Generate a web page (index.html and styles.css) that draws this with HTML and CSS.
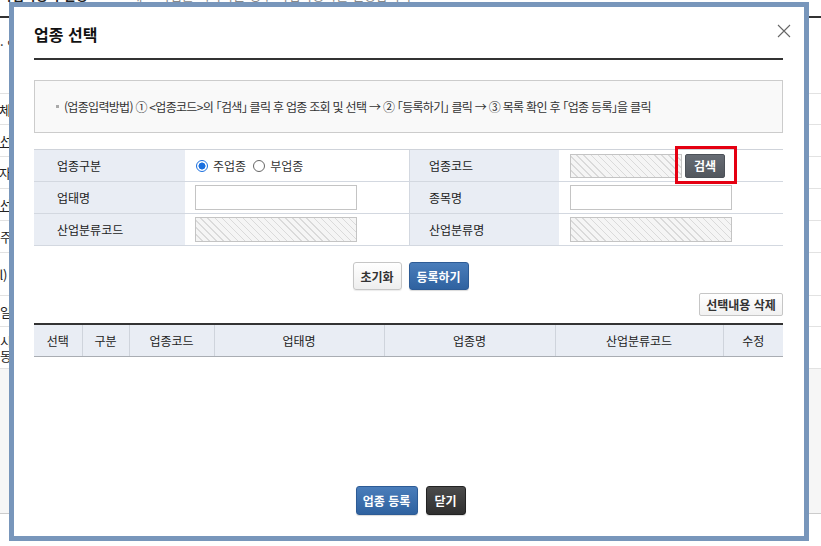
FILE: index.html
```html
<!DOCTYPE html>
<html lang="ko">
<head>
<meta charset="utf-8">
<title>업종 선택</title>
<link rel="stylesheet" href="styles.css">
</head>
<body>
<div class="page">
  <div class="page-top"><b>사업자등록 신청</b>　<span>새로 사업을 시작하는 경우 사업자등록을 신청합니다.</span></div>
  <div class="page-rule"></div>
  <div class="page-sub">· 업종</div>
  <div class="page-rows">
    <div class="prow r32"><span class="pl">업체</span></div>
    <div class="prow r32"><span class="pl0 ul">선택</span></div>
    <div class="prow r32"><span class="pl">대자</span></div>
    <div class="prow r32"><span class="pl0 ul">선택</span></div>
    <div class="prow r32"><span class="pl0">주소</span></div>
    <div class="prow r43"><span class="pl2">(l)</span></div>
    <div class="prow r31"><span class="pl0">일자</span></div>
    <div class="prow r42"><span class="pl3">시 -<br>동</span></div>
  </div>
  <div class="page-gray"></div>
</div>

<div class="modal">
  <h2 class="modal-title">업종 선택</h2>
  <button class="close" type="button" aria-label="닫기">
    <svg width="14" height="14" viewBox="0 0 14 14"><path d="M1 1L13 13M13 1L1 13" stroke="#666" stroke-width="1.1" fill="none"/></svg>
  </button>

  <div class="guide"><span class="bullet"></span><span>(업종입력방법) ① &lt;업종코드&gt;의 ｢검색｣ 클릭 후 업종 조회 및 선택 → ② ｢등록하기｣ 클릭 → ③ 목록 확인 후 ｢업종 등록｣을 클릭</span></div>

  <div class="form">
    <div class="th">업종구분</div>
    <div class="td">
      <label class="radio on"><i></i>주업종</label>
      <label class="radio"><i></i>부업종</label>
    </div>
    <div class="th th2">업종코드</div>
    <div class="td td4">
      <span class="inp dis code"></span>
      <span class="search-wrap"><button class="btn-search" type="button">검색</button></span>
    </div>

    <div class="th">업태명</div>
    <div class="td"><span class="inp"></span></div>
    <div class="th th2">종목명</div>
    <div class="td td4"><span class="inp"></span></div>

    <div class="th">산업분류코드</div>
    <div class="td"><span class="inp dis"></span></div>
    <div class="th th2">산업분류명</div>
    <div class="td td4"><span class="inp dis"></span></div>
  </div>

  <div class="btn-row">
    <button class="btn btn-white" type="button">초기화</button>
    <button class="btn btn-blue" type="button">등록하기</button>
  </div>

  <div class="del-row">
    <button class="btn-del" type="button">선택내용 삭제</button>
  </div>

  <table class="list">
    <colgroup>
      <col class="c48"><col class="c47"><col class="c85"><col class="c170"><col class="c171"><col class="c168"><col class="c60">
    </colgroup>
    <thead>
      <tr><th>선택</th><th>구분</th><th>업종코드</th><th>업태명</th><th>업종명</th><th>산업분류코드</th><th>수정</th></tr>
    </thead>
  </table>

  <div class="footer">
    <button class="btn btn-blue btn-foot" type="button">업종 등록</button>
    <button class="btn btn-dark btn-foot" type="button">닫기</button>
  </div>
</div>
</body>
</html>
```

FILE: styles.css
```css
* { box-sizing: border-box; }
*::before, *::after { box-sizing: border-box; }
html, body { margin: 0; padding: 0; }
body {
  width: 821px;
  height: 546px;
  overflow: hidden;
  position: relative;
  background: #fff;
  color: #333;
  font-family: "Noto Sans CJK KR", "Noto Sans", sans-serif;
}

/* background page */
.page { font-size: 13px; color: #222; }
.page-top {
  height: 16px;
  line-height: 16px;
  padding-top: 0;
  white-space: nowrap;
  font-size: 13px;
  overflow: hidden;
}
.page-top b, .page-top span { display: inline-block; margin-top: -13px; vertical-align: top; }
.page-top span { color: #888; margin-left: 30px; }
.page-rule { height: 2px; background: #333; }
.page-sub { height: 75px; padding-top: 18px; line-height: 18px; font-size: 13px; }
.prow { border-bottom: 1px solid #e2e2e2; display: flex; align-items: center; white-space: nowrap; }
.prow:first-child { border-top: 1px solid #e2e2e2; }
.r32 { height: 32px; }
.r43 { height: 43px; }
.r31 { height: 31px; }
.r42 { height: 42px; }
.pl { margin-left: -13px; }
.pl0 { margin-left: 0; }
.ul { text-decoration: underline; }
.pl2 { margin-left: -5px; }
.pl3 { margin-left: 0; line-height: 15px; }
.page-gray { height: 145px; background: #f6f6f6; border-bottom: 1px solid #ccc; }

/* modal */
.modal {
  position: absolute;
  left: 9px;
  top: 2px;
  width: 800px;
  height: 539px;
  border: 5px solid #7896bb;
  background: #fff;
  padding: 0 21px 21px 20px;
  display: flex;
  flex-direction: column;
}
.modal-title {
  margin: 0;
  padding: 16px 0 13px;
  font-size: 16px;
  line-height: 22px;
  font-weight: bold;
  color: #111;
  border-bottom: 2px solid #333;
}
.close {
  position: absolute;
  top: 17px;
  right: 13px;
  width: 14px;
  height: 14px;
  padding: 0;
  border: 0;
  background: none;
}
.close svg { display: block; }

.guide {
  margin-top: 20px;
  border: 1px solid #ccc;
  background: #f9f9f9;
  padding: 16px 10px 16px 21px;
  font-size: 12px;
  line-height: 19px;
  color: #333;
  display: flex;
  align-items: center;
  white-space: nowrap;
  letter-spacing: -0.7px;
}
.bullet {
  width: 3px;
  height: 3px;
  background: #aaa;
  margin-right: 5px;
  flex: none;
}

.form {
  margin-top: 16px;
  border-top: 1px solid #cfd3da;
  display: grid;
  grid-template-columns: 151px 224px 150px 224px;
}
.th {
  height: 32px;
  background: #e9edf4;
  border-bottom: 1px solid #d3d8e0;
  padding-left: 23px;
  display: flex;
  align-items: center;
  font-size: 12px;
  color: #222;
}
.th2 { padding-left: 19px; border-left: 1px solid #d3d8e0; }
.td {
  height: 32px;
  border-bottom: 1px solid #d3d8e0;
  padding-left: 10px;
  display: flex;
  align-items: center;
  font-size: 12px;
}
.td4 { padding-left: 11px; }

.radio { display: inline-flex; align-items: center; gap: 5px; margin-right: 7px; color: #333; }
.radio:first-child { margin-left: 1px; }
.radio i {
  width: 12px;
  height: 12px;
  border-radius: 50%;
  border: 1px solid #666;
  background: #fff;
}
.radio.on i {
  border-color: #1a6fdf;
  background: radial-gradient(circle, #1a6fdf 0 3.2px, #fff 3.8px);
}

.inp {
  display: block;
  width: 162px;
  height: 25px;
  border: 1px solid #c4c4c4;
  background: #fff;
}
.inp.dis {
  background: repeating-linear-gradient(45deg, #f5f5f5 0 4px, #dadada 4px 5px);
}
.inp.code { width: 112px; height: 24px; }

.search-wrap { position: relative; margin-left: 3px; display: block; height: 24px; }
.search-wrap::after {
  content: "";
  position: absolute;
  left: -10px;
  top: -8px;
  width: 62px;
  height: 38px;
  border: 3px solid #e50012;
}
.btn-search {
  display: block;
  width: 40px;
  height: 24px;
  padding: 0;
  border: 1px solid #4c5158;
  border-radius: 2px;
  background: linear-gradient(#676c74, #52575e);
  color: #fff;
  font-family: inherit;
  font-size: 12px;
  font-weight: bold;
}

.btn {
  height: 28px;
  padding: 0;
  border-radius: 3px;
  font-family: inherit;
  font-size: 12px;
  font-weight: bold;
}
.btn-white {
  width: 49px;
  border: 1px solid #c6c6c6;
  background: linear-gradient(#ffffff, #eeeeee);
  color: #333;
  box-shadow: 0 1px 1px rgba(0,0,0,0.08);
}
.btn-blue {
  width: 60px;
  border: 1px solid #2d5b95;
  background: linear-gradient(#4a7dba, #2f62a0);
  color: #fff;
  box-shadow: 0 1px 1px rgba(0,0,0,0.15);
}
.btn-dark {
  border: 1px solid #222;
  background: linear-gradient(#4b4b4b, #2f2f2f);
  color: #fff;
  box-shadow: 0 1px 1px rgba(0,0,0,0.15);
}
.btn-row {
  margin-top: 16px;
  padding-left: 4px;
  display: flex;
  justify-content: center;
  gap: 7px;
}

.del-row { margin-top: 3px; display: flex; justify-content: flex-end; }
.btn-del {
  width: 84px;
  height: 23px;
  padding: 0;
  border: 1px solid #c6c6c6;
  border-radius: 2px;
  background: linear-gradient(#ffffff, #f1f1f1);
  color: #333;
  font-family: inherit;
  font-size: 12px;
  font-weight: bold;
}

.list {
  margin-top: 7px;
  width: 749px;
  border-collapse: collapse;
  border-top: 2px solid #333;
  table-layout: fixed;
}
.c48 { width: 48px; }
.c47 { width: 47px; }
.c85 { width: 85px; }
.c170 { width: 170px; }
.c171 { width: 171px; }
.c168 { width: 168px; }
.c60 { width: 60px; }
.list th {
  height: 32px;
  padding: 0;
  background: #e9edf4;
  border-bottom: 1px solid #a9adb3;
  border-left: 1px solid #cfd4dc;
  font-size: 12px;
  font-weight: normal;
  color: #222;
}
.list th:first-child { border-left: 0; }

.footer {
  margin-top: auto;
  display: flex;
  justify-content: center;
  gap: 8px;
  padding-left: 4px;
}
.btn-foot { height: 29px; }
.btn-blue.btn-foot { width: 62px; }
.btn-dark.btn-foot { width: 40px; }
```
